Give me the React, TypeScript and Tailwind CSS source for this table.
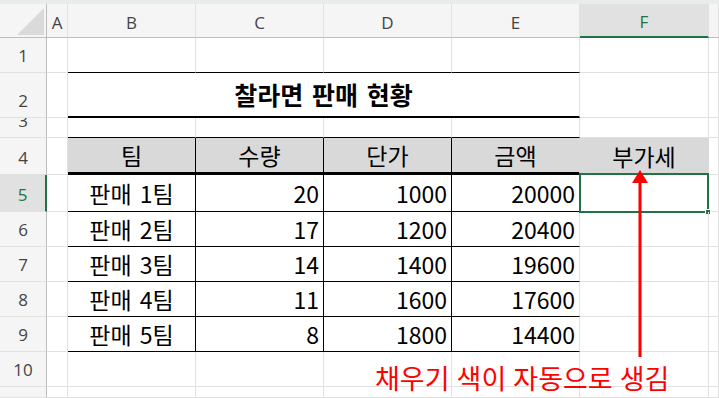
import React from "react";

// 판매 데이터: 팀, 수량, 단가, 금액
const rows: [string, number, number, number][] = [
  ["판매 1팀", 20, 1000, 20000],
  ["판매 2팀", 17, 1200, 20400],
  ["판매 3팀", 14, 1400, 19600],
  ["판매 4팀", 11, 1600, 17600],
  ["판매 5팀", 8, 1800, 14400],
];

const gr = "border-r border-r-[#e1e1e1]";
const gb = "border-b border-b-[#e1e1e1]";
const kr = "font-['Noto_Sans_CJK_KR',sans-serif] text-[23px] leading-none text-black [word-spacing:3px]";

function Cell({
  r = gr,
  b = gb,
  className = "",
  children,
}: {
  r?: string;
  b?: string;
  className?: string;
  children?: React.ReactNode;
}) {
  return <div className={`${r} ${b} flex min-w-0 items-center ${className}`}>{children}</div>;
}

function RowHead({ n, sel }: { n?: number; sel?: boolean }) {
  return (
    <div
      className={`flex items-end justify-center overflow-hidden pb-[8px] font-['Open_Sans',sans-serif] text-[17px] leading-none ${
        sel
          ? "border-r-2 border-r-[#217346] bg-[#e1e1e1] text-[#217346]"
          : "border-r border-r-[#bdbdbd] bg-[#f5f5f5] text-[#444]"
      } border-b border-b-[#e1e1e1]`}
    >
      {n}
    </div>
  );
}

function ColHead({ label, sel }: { label?: string; sel?: boolean }) {
  return (
    <div
      className={`flex items-center justify-center pt-[3px] font-['Open_Sans',sans-serif] text-[17px] leading-none ${
        sel
          ? "border-b-2 border-b-[#217346] bg-[#e1e1e1] text-[#217346]"
          : "border-b border-b-[#bdbdbd] bg-[#f5f5f5] text-[#444]"
      } border-r border-r-[#e1e1e1]`}
    >
      {label}
    </div>
  );
}

export default function App() {
  return (
    <div className="relative h-[398px] w-[719px] overflow-hidden bg-white">
      <div className="h-[4px] bg-[#e8ecec]" />
      <div className="grid h-[394px] grid-cols-[47px_21px_128px_128px_128px_128px_129px_1fr] grid-rows-[34px_35px_45px_20px_37px_37px_35px_35px_35px_35px_35px_1fr]">
        {/* header row */}
        <div className="relative border-r border-r-[#bdbdbd] border-b border-b-[#bdbdbd] bg-[#f5f5f5]">
          <svg className="absolute left-[17px] top-[4px]" width="28" height="28" viewBox="0 0 28 28">
            <polygon points="27,0 27,27 0,27" fill="#dadada" />
          </svg>
        </div>
        <ColHead label="A" />
        <ColHead label="B" />
        <ColHead label="C" />
        <ColHead label="D" />
        <ColHead label="E" />
        <ColHead label="F" sel />
        <ColHead />

        {/* row 1 */}
        <RowHead n={1} />
        <Cell />
        <Cell b="border-b border-b-black" />
        <Cell b="border-b border-b-black" />
        <Cell b="border-b border-b-black" />
        <Cell b="border-b border-b-black" />
        <Cell />
        <Cell />

        {/* row 2 - merged title */}
        <RowHead n={2} />
        <Cell />
        <Cell b="border-b-2 border-b-black" className="col-span-4 justify-center">
          <span className="font-['Noto_Sans_CJK_KR',sans-serif] text-[25px] font-bold leading-none text-black [word-spacing:3px]">
            찰라면 판매 현황
          </span>
        </Cell>
        <Cell />
        <Cell />

        {/* row 3 */}
        <RowHead n={3} />
        <Cell />
        <Cell b="border-b border-b-black" />
        <Cell b="border-b border-b-black" />
        <Cell b="border-b border-b-black" />
        <Cell b="border-b border-b-black" />
        <Cell />
        <Cell />

        {/* row 4 - table header */}
        <RowHead n={4} />
        <Cell />
        {["팀", "수량", "단가", "금액"].map((h, i) => (
          <Cell
            key={h}
            r={i < 3 ? "border-r border-r-black" : "border-r border-r-[#d9d9d9]"}
            b="border-b-[3px] border-b-black"
            className="justify-center bg-[#d9d9d9]"
          >
            <span className={kr}>{h}</span>
          </Cell>
        ))}
        <Cell r="border-r border-r-[#d9d9d9]" b="border-b border-b-[#d9d9d9]" className="justify-center bg-[#d9d9d9]">
          <span className={kr}>부가세</span>
        </Cell>
        <Cell />

        {/* rows 5-9 */}
        {rows.map(([team, qty, price, amt], i) => (
          <React.Fragment key={team}>
            <RowHead n={i + 5} sel={i === 0} />
            <Cell />
            <Cell r="border-r border-r-black" b="border-b border-b-black" className="justify-center">
              <span className={kr}>{team}</span>
            </Cell>
            <Cell r="border-r border-r-black" b="border-b border-b-black" className="justify-end pr-[4px]">
              <span className={kr}>{qty}</span>
            </Cell>
            <Cell r="border-r border-r-black" b="border-b border-b-black" className="justify-end pr-[4px]">
              <span className={kr}>{price}</span>
            </Cell>
            <Cell b="border-b border-b-black" className="justify-end pr-[4px]">
              <span className={kr}>{amt}</span>
            </Cell>
            <Cell className="relative">
              {i === 0 && (
                <div className="absolute -left-px -top-[2px] -right-px -bottom-[2px] border-2 border-[#217346]">
                  <div className="absolute -bottom-[4px] -right-[4px] h-[6px] w-[6px] border border-white bg-[#217346]" />
                </div>
              )}
            </Cell>
            <Cell />
          </React.Fragment>
        ))}

        {/* row 10 */}
        <RowHead n={10} />
        {Array.from({ length: 7 }).map((_, i) => (
          <Cell key={i} />
        ))}

        {/* partial row 11 */}
        <RowHead />
        {Array.from({ length: 7 }).map((_, i) => (
          <Cell key={i} />
        ))}
      </div>

      {/* red arrow annotation */}
      <svg className="absolute left-[630px] top-[168px]" width="20" height="192" viewBox="0 0 20 192">
        <polygon points="10,2 18,15 2,15" fill="#ff0000" />
        <rect x="8.5" y="14" width="3" height="175" fill="#ff0000" />
      </svg>
      <div className="absolute left-[375px] top-[364px] whitespace-nowrap font-['Noto_Sans_CJK_KR',sans-serif] text-[27px] leading-none text-[#ff0000] [word-spacing:1px]">
        채우기 색이 자동으로 생김
      </div>
    </div>
  );
}
